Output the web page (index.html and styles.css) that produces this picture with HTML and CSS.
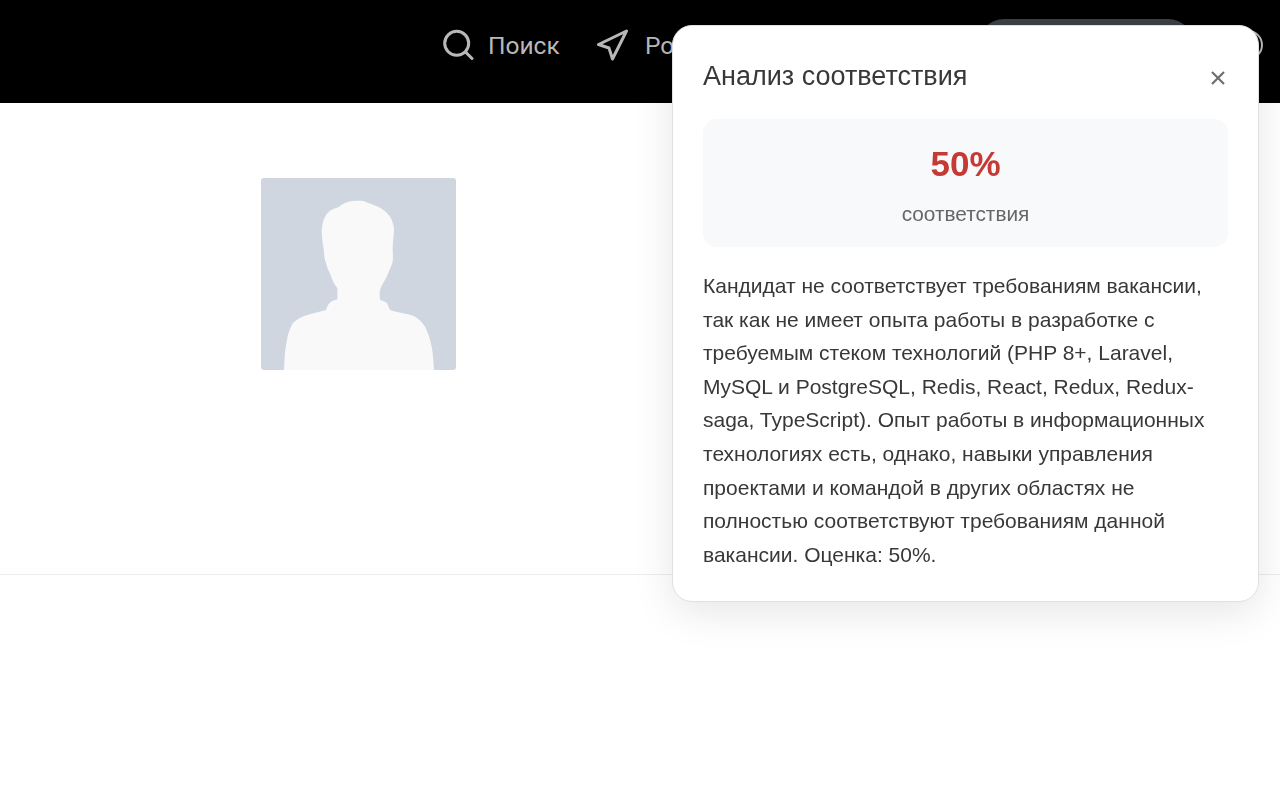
FILE: index.html
```html
<!DOCTYPE html>
<html lang="ru">
<head>
  <meta charset="utf-8">
  <title>Анализ соответствия</title>
  <link rel="stylesheet" href="styles.css">
</head>
<body>
  <header class="topbar">
    <a class="nav-item nav-search">
      <svg class="nav-icon" viewBox="0 0 32 32" fill="none" stroke="currentColor" stroke-width="3" stroke-linecap="round" stroke-linejoin="round">
        <circle cx="14.700" cy="14.300" r="12"/>
        <path d="M24 23.500l6 6"/>
      </svg>
      <span>Поиск</span>
    </a>
    <a class="nav-item nav-send">
      <svg class="nav-icon" viewBox="0 0 32 32" fill="none" stroke="currentColor" stroke-width="3" stroke-linecap="round" stroke-linejoin="round">
        <path d="M30.500 2L2.500 15.500l10.500 3.500 3.500 11z"/>
      </svg>
      <span>Роль</span>
    </a>
    <div class="nav-pill"></div>
    <div class="nav-avatar"></div>
  </header>

  <main class="profile">
    <div class="photo">
      <svg viewBox="0 0 195 192" width="195" height="192">
        <path class="silhouette" d="M23 192C23.500 180 24 170 26 162C27 155 29 150 32 145C36 141 40 139 44 137.700C52 135 59 134 65 132C66 129 67 126 69 124.700C71 122.500 74 122.500 76.300 121.300C76.500 117 76.500 114 76.300 110C74 107 72 104 70.700 100C69.500 95 66 91 65 85C63.500 81 63 77 63 73.700C62 66 60.500 59 60.700 52C61.500 45 63 39 66.300 35.300C69 32 73 30.500 77.300 29.300C80 27 82.500 25.500 85.700 24.300C92 22.500 97 22.500 102.300 23C107 25 112 26.500 117 28.700C122 31 126 34.500 129 38.700C131 42 132.500 46 133 50.300C133 58 131.500 65 131.700 72C132 76 132 80 131.700 83.700C130 89 127.500 94 125.700 98.700C123.500 103 120.500 107 119 112C118.500 115 118.500 119 119 122C121.500 122.500 124 123.500 125.700 125C127 127 128 129.500 129 132C137 134.500 145 135.500 152.300 137.700C157 140 161 144 164 148.700C167 154 169 161 170.700 168.700C172 176 172.500 184 173 192Z"/>
      </svg>
    </div>
  </main>
  <hr class="divider">

  <section class="match-popup">
    <div class="popup-head">
      <h3>Анализ соответствия</h3>
      <svg class="popup-close" viewBox="0 0 14 14" fill="none" stroke="currentColor" stroke-width="2.200">
        <path d="M1 1l12 12M13 1L1 13"/>
      </svg>
    </div>
    <div class="score-box">
      <div class="score-value">50%</div>
      <div class="score-label">соответствия</div>
    </div>
    <p class="popup-text">Кандидат не соответствует требованиям вакансии, так как не имеет опыта работы в разработке с требуемым стеком технологий (PHP 8+, Laravel, MySQL и PostgreSQL, Redis, React, Redux, Redux-saga, TypeScript). Опыт работы в информационных технологиях есть, однако, навыки управления проектами и командой в других областях не полностью соответствуют требованиям данной вакансии. Оценка: 50%.</p>
  </section>
</body>
</html>
```

FILE: styles.css
```css
* {
  box-sizing: border-box;
}
body {
  margin: 0;
  font-family: "Liberation Sans", Arial, sans-serif;
  background-color: #fff;
  overflow: hidden;
}
.topbar {
  height: 103px;
  background-color: #000;
  display: flex;
  align-items: center;
  padding-left: 442px;
  padding-bottom: 13px;
  color: #b8b8b8;
}
.nav-item {
  display: flex;
  align-items: center;
  font-family: Roboto, sans-serif;
  font-size: 24.500px;
}
.nav-icon {
  width: 32px;
  height: 32px;
}
.nav-search {
  width: 154px;
  gap: 14px;
}
.nav-send {
  width: 382px;
  gap: 17px;
}
.nav-pill {
  width: 216px;
  height: 52px;
  border-radius: 26px;
  background-color: #3a4147;
}
.nav-avatar {
  width: 30px;
  height: 30px;
  margin-left: 39px;
  border: 2.500px solid #b8b8b8;
  border-radius: 50%;
}
.profile {
  height: 471px;
  padding: 75px 0 0 261px;
}
.photo {
  width: 195px;
  height: 192px;
  background-color: #cfd6e0;
  border-radius: 3px;
  overflow: hidden;
}
.photo svg {
  display: block;
}
.silhouette {
  fill: #f9f9f9;
}
.divider {
  margin: 0;
  border: 0;
  border-top: 1px solid #ececec;
}
.match-popup {
  position: fixed;
  top: 25px;
  left: 672px;
  width: 587px;
  height: 577px;
  padding: 30px;
  background-color: #fff;
  border: 1px solid #e0e0e0;
  border-radius: 20px;
  box-shadow: 0 10px 40px rgba(0, 0, 0, 0.1);
  color: #383838;
}
.popup-head {
  display: flex;
  justify-content: space-between;
  align-items: center;
  height: 40px;
  margin-bottom: 23px;
}
.popup-head h3 {
  margin: 0;
  font-size: 27px;
  font-weight: 400;
}
.popup-close {
  width: 14px;
  height: 14px;
  margin: 4px 3px 0 0;
  color: #6e6e6e;
}
.score-box {
  height: 128px;
  padding-top: 23px;
  background-color: #f8f9fa;
  border-radius: 14px;
  text-align: center;
}
.score-value {
  font-size: 35px;
  font-weight: 700;
  line-height: 44px;
  color: #c53a35;
}
.score-label {
  margin-top: 16px;
  font-size: 20.800px;
  line-height: 24px;
  color: #666;
}
.popup-text {
  margin: 22px 0 0;
  font-size: 21px;
  line-height: 33.600px;
}
```
